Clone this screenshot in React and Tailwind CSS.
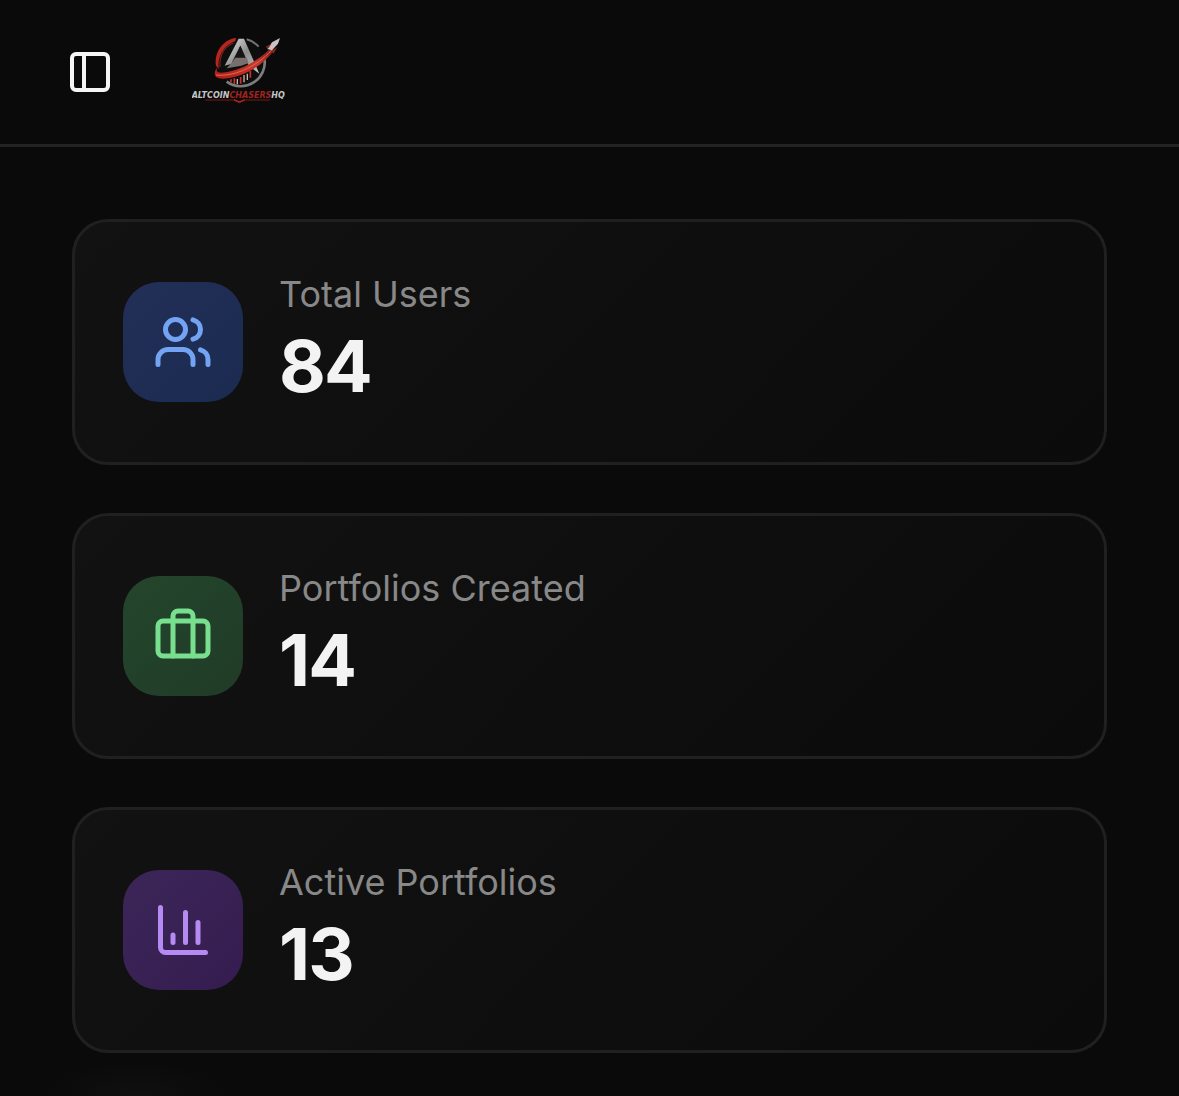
import React from 'react';
import { Users, PanelLeft } from 'lucide-react';


const Logo = () => (
  <svg viewBox="36 33 288 216" className="w-24 h-[72px]" role="img" aria-label="AltcoinChasersHQ">
    <defs>
      <linearGradient id="steel" x1="0" y1="0" x2="1" y2="1">
        <stop offset="0" stopColor="#e8e8e8" />
        <stop offset="0.5" stopColor="#8c8c8c" />
        <stop offset="1" stopColor="#c4c4c4" />
      </linearGradient>
      <linearGradient id="flame" x1="0" y1="1" x2="1" y2="0">
        <stop offset="0" stopColor="#b01c15" />
        <stop offset="0.6" stopColor="#c8382c" />
        <stop offset="1" stopColor="#7d1a14" />
      </linearGradient>
    </defs>

    {/* ring */}
    <circle cx="182" cy="112" r="70" fill="#0e0e0e" />
    <path d="M200 43A72 72 0 0 1 236 65" fill="none" stroke="#77706e" strokeWidth="6" />
    <path d="M253 98A72 72 0 0 1 140 170" fill="none" stroke="#7d7d7d" strokeWidth="8" />
    <path d="M168 38C128 44 102 82 108 122L116 132C112 94 130 62 166 48Z" fill="#b8251c" />
    <path d="M160 54C132 66 118 92 120 126" fill="none" stroke="#6d2320" strokeWidth="4" />

    {/* letter mark */}
    <path d="M134 122L176 41H192L238 146L206 122L181 62L156 116Z" fill="url(#steel)" />
    <path d="M156 112L181 62L203 112Z" fill="#151515" />
    <path d="M156 112L166 98H200L206 114L184 122L140 130Z" fill="#77706e" />

    {/* rocket trail */}
    <path d="M112 126C98 146 102 162 130 161C188 158 246 124 284 74L266 74C232 108 184 134 138 142C112 146 106 140 112 126Z" fill="url(#flame)" />
    <path d="M108 150C156 156 226 130 276 74" fill="none" stroke="#de6c5c" strokeWidth="3" />
    <path d="M262 72L276 52L300 39L294 56L276 76Z" fill="#c9c4c2" />
    <path d="M256 66L274 56L266 70ZM274 78L292 66L280 86Z" fill="#8c2a22" />

    {/* candles */}
    <path d="M153 163V172M163 160V177M182 156V176M211 138V158" stroke="#c4352a" strokeWidth="5" />
    <path d="M172 162V178M192 150V172M202 146V165" stroke="#cfb0aa" strokeWidth="4" />

    <text x="35" y="219" className="font-['DejaVu_Sans',sans-serif] text-[24px] font-bold italic" fill="#c4c4c4">
      ALTCOIN<tspan fill="#a0241e">CHASERS</tspan>HQ
    </text>
    <path d="M76 225H160L178 233L196 225H270" fill="none" stroke="#7d1713" strokeWidth="3" />
    <path d="M162 224L178 231L194 224" fill="none" stroke="#b8251c" strokeWidth="4" />
  </svg>
);


const BarChart = ({ className = '' }) => (
  <svg
    viewBox="0 0 24 24"
    fill="none"
    stroke="currentColor"
    strokeWidth="2"
    strokeLinecap="round"
    strokeLinejoin="round"
    className={className}
    aria-hidden="true"
  >
    <path d="M3 3v16a2 2 0 0 0 2 2h16" />
    <path d="M18 17V9" />
    <path d="M13 17V5" />
    <path d="M8 17v-3" />
  </svg>
);


const Suitcase = ({ className = '' }) => (
  <svg
    viewBox="0 0 24 24"
    fill="none"
    stroke="currentColor"
    strokeWidth="2"
    strokeLinecap="round"
    strokeLinejoin="round"
    className={className}
    aria-hidden="true"
  >
    <path d="M16 20V4a2 2 0 0 0-2-2h-4a2 2 0 0 0-2 2v16" />
    <rect width="20" height="14" x="2" y="6" rx="2" />
  </svg>
);


const stats = [
  {
    label: 'Total Users',
    value: 84,
    icon: Users,
    tile: 'from-[#222f58] to-[#1b2b50] text-[#73a3f3]'
  },
  {
    label: 'Portfolios Created',
    value: 14,
    icon: Suitcase,
    tile: 'from-[#24462c] to-[#203b27] text-[#78df8e]'
  },
  {
    label: 'Active Portfolios',
    value: 13,
    icon: BarChart,
    tile: 'from-[#3c2658] to-[#351c50] text-[#b58af3]'
  }
];


const StatCard = ({ label, value, icon: Icon, tile }) => (
  <div className="flex items-center gap-9 p-12 rounded-[36px] border-3 border-[#202020] bg-linear-135 from-[#121212] to-[#0b0b0b]">
    <div className={`flex items-center justify-center shrink-0 size-30 rounded-[36px] bg-linear-to-br ${tile}`}>
      <Icon className="size-15" />
    </div>
    <div>
      <p className="text-4xl leading-12 text-[#888888]">{label}</p>
      <p className="text-7xl leading-24 font-bold tracking-tight text-[#f3f3f3]">{value}</p>
    </div>
  </div>
);


export const App = () => (
  <div className="min-h-screen bg-[#0a0a0a] bg-[radial-gradient(90px_36px_at_136px_100%,#101010,transparent)] font-[Inter,sans-serif]">
    <header className="flex items-center gap-15 h-[147px] px-12 border-b-3 border-[#232323]">
      <button type="button" aria-label="Toggle Sidebar" className="flex items-center justify-center size-21 text-[#f5f5f5]">
        <PanelLeft className="size-12" />
      </button>
      <a href="#home">
        <Logo />
      </a>
    </header>

    <main className="flex flex-col gap-12 px-18 pt-18 pb-11">
      {stats.map(stat => (
        <StatCard key={stat.label} {...stat} />
      ))}
    </main>
  </div>
);

export default App;
